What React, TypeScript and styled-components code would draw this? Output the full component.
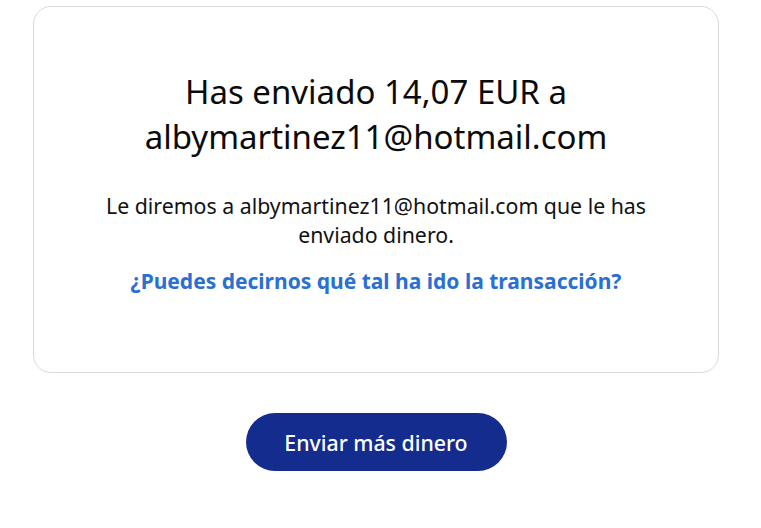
import React, { FC } from "react"
import styled, { createGlobalStyle } from "styled-components"

const GlobalStyle = createGlobalStyle`
  body {
    margin: 0;
    background: #ffffff;
    font-family: "Noto Sans", "Open Sans", sans-serif;
    color: #000000;
  }
`

const Page = styled.div`
  display: flex;
  flex-direction: column;
  align-items: center;
  padding: 6px 42px 0 33px;
`

const Card = styled.section`
  box-sizing: border-box;
  width: 100%;
  height: 367px;
  border: 1px solid #dcdad5;
  border-radius: 18px;
  padding: 62px 30px 0;
  display: flex;
  flex-direction: column;
  align-items: center;
  text-align: center;
`

const Title = styled.h1`
  margin: 0;
  font-size: 33px;
  line-height: 45px;
  font-weight: 400;
  color: #0b0b0b;
`

const Message = styled.p`
  margin: 32px 0 0;
  max-width: 580px;
  font-size: 21.3px;
  line-height: 29px;
  color: #111111;
`

const FeedbackLink = styled.a`
  margin-top: 18px;
  font-size: 21px;
  line-height: 28px;
  font-weight: 700;
  color: #2a6fd3;
  text-decoration: none;
  cursor: pointer;
`

const PrimaryButton = styled.button`
  margin-top: 40px;
  width: 261px;
  height: 58px;
  border: none;
  border-radius: 29px;
  background: #142c8e;
  color: #ffffff;
  font-family: "Noto Sans", "Open Sans", sans-serif;
  font-size: 21.3px;
  font-weight: 500;
  cursor: pointer;
`

const App: FC = () => {
  return (
    <>
      <GlobalStyle />
      <Page>
        <Card>
          <Title>
            Has enviado 14,07 EUR a
            <br />
            albymartinez11@hotmail.com
          </Title>
          <Message>
            Le diremos a albymartinez11@hotmail.com que le has enviado dinero.
          </Message>
          <FeedbackLink>¿Puedes decirnos qué tal ha ido la transacción?</FeedbackLink>
        </Card>
        <PrimaryButton>Enviar más dinero</PrimaryButton>
      </Page>
    </>
  )
}

export default App
